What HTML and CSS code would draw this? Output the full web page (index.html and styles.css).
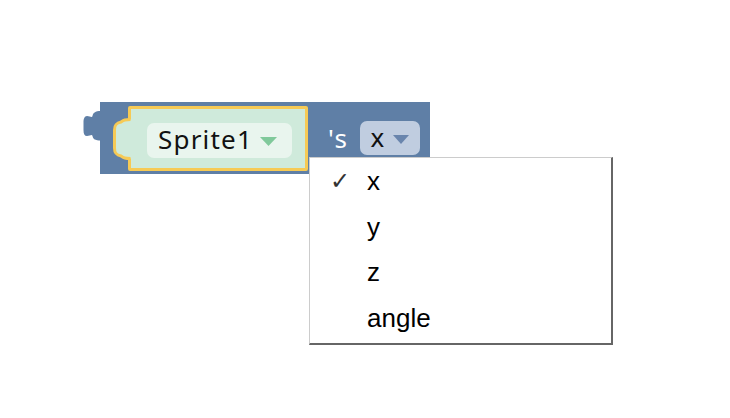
FILE: index.html
```html
<!DOCTYPE html>
<html>
<head>
<meta charset="utf-8">
<link rel="stylesheet" href="styles.css">
</head>
<body>
<div class="stage">
  <div class="block">
    <svg class="tab" width="18" height="30" viewBox="0 0 18 30">
      <path d="M18,0 C12,0 10,2 9.5,5 C9,7 7,5 4,5 C1.5,5 0.5,8 0.5,11 L0.5,19 C0.5,23 1.5,25 4,25 C7,25 9,23 9.5,25 C10,28 12,29.5 18,29.5 Z" fill="#5f7fa6"/>
    </svg>
    <div class="slot">
      <svg class="notch" width="22" height="65" viewBox="0 0 22 65">
        <path d="M22,13.5 L17,13.5 C13,13.5 12,14 9,16 C4,17 2.5,19 2.5,24 L2.5,42 C2.5,47 4,49 9,50 C12,52 13,52.5 17,52.5 L22,52.5 Z" fill="#cfeadb"/>
        <path d="M18.5,13.5 C13,13.5 12,14 9,16 C4,17 2.5,19 2.5,24 L2.5,42 C2.5,47 4,49 9,50 C12,52 13,52.5 18.5,52.5" fill="none" stroke="#f6ca55" stroke-width="3"/>
      </svg>
      <div class="field">
        <span class="field-text">Sprite1</span>
        <svg class="arrow" width="17" height="9" viewBox="0 0 17 9"><path d="M0,0 L17,0 L8.5,9 Z" fill="#80c99b"/></svg>
      </div>
    </div>
    <span class="poss">'s</span>
    <div class="prop">
      <span class="prop-text">x</span>
      <svg class="arrow" width="16" height="9" viewBox="0 0 16 9"><path d="M0,0 L16,0 L8,9 Z" fill="#6985ad"/></svg>
    </div>
  </div>
  <div class="menu">
    <div class="item"><span class="check">✓</span><span class="label">x</span></div>
    <div class="item"><span class="check"></span><span class="label">y</span></div>
    <div class="item"><span class="check"></span><span class="label">z</span></div>
    <div class="item"><span class="check"></span><span class="label">angle</span></div>
  </div>
</div>
</body>
</html>
```

FILE: styles.css
```css
html, body {
  margin: 0;
  padding: 0;
  background: #ffffff;
}

.stage {
  position: relative;
  width: 730px;
  height: 418px;
  padding: 102px 0 0 100px;
  box-sizing: border-box;
}

.block {
  position: relative;
  width: 330px;
  height: 72px;
  background: #5f7fa6;
  display: flex;
  align-items: flex-start;
  padding-left: 28px;
  box-sizing: border-box;
}

.tab {
  position: absolute;
  left: -17px;
  top: 9px;
}

.slot {
  position: relative;
  width: 180px;
  height: 65px;
  margin-top: 4px;
  box-sizing: border-box;
  background: #cfeadb;
  border: 3px solid #f6ca55;
  border-radius: 2px;
  padding: 14px 0 0 16px;
  display: flex;
  align-items: flex-start;
}

.notch {
  position: absolute;
  left: -19px;
  top: -3px;
}

.field {
  width: 145px;
  height: 35px;
  box-sizing: border-box;
  background: #e9f5ee;
  border-radius: 7px;
  display: flex;
  align-items: center;
  padding-left: 11px;
  gap: 7px;
}

.field-text {
  font-family: "Noto Sans", sans-serif;
  font-size: 26px;
  letter-spacing: 1.2px;
  color: #111;
  line-height: 35px;
  margin-top: -2px;
}

.arrow {
  display: block;
  margin-top: 2px;
}

.poss {
  font-family: "Noto Sans", sans-serif;
  font-size: 26px;
  color: #ffffff;
  margin-left: 20px;
  line-height: 34px;
  margin-top: 19px;
  letter-spacing: 1.5px;
}

.prop {
  width: 60px;
  height: 34px;
  box-sizing: border-box;
  margin-top: 19px;
  margin-left: 11px;
  background: #c0cde0;
  border-radius: 7px;
  display: flex;
  align-items: center;
  padding-left: 11px;
  gap: 9px;
}

.prop-text {
  font-family: "Noto Sans", sans-serif;
  font-size: 26px;
  color: #111;
  line-height: 34px;
  margin-top: -2px;
}

.menu {
  position: absolute;
  left: 309px;
  top: 157px;
  width: 304px;
  box-sizing: border-box;
  background: #ffffff;
  border-top: 1px solid #cccccc;
  border-left: 1px solid #cccccc;
  border-right: 2px solid #666666;
  border-bottom: 2px solid #666666;
  padding: 1px 0 2px 0;
}

.item {
  height: 45.5px;
  display: flex;
  align-items: center;
  font-family: "Liberation Sans", Arial, sans-serif;
  font-size: 26px;
  color: #000;
}

.check {
  width: 37px;
  padding-left: 20px;
  box-sizing: content-box;
  font-family: "DejaVu Sans", sans-serif;
  font-size: 24px;
  color: #333;
  font-style: italic;
  margin-top: -2px;
}

.label {
  line-height: 1;
  margin-top: -1px;
}
```
